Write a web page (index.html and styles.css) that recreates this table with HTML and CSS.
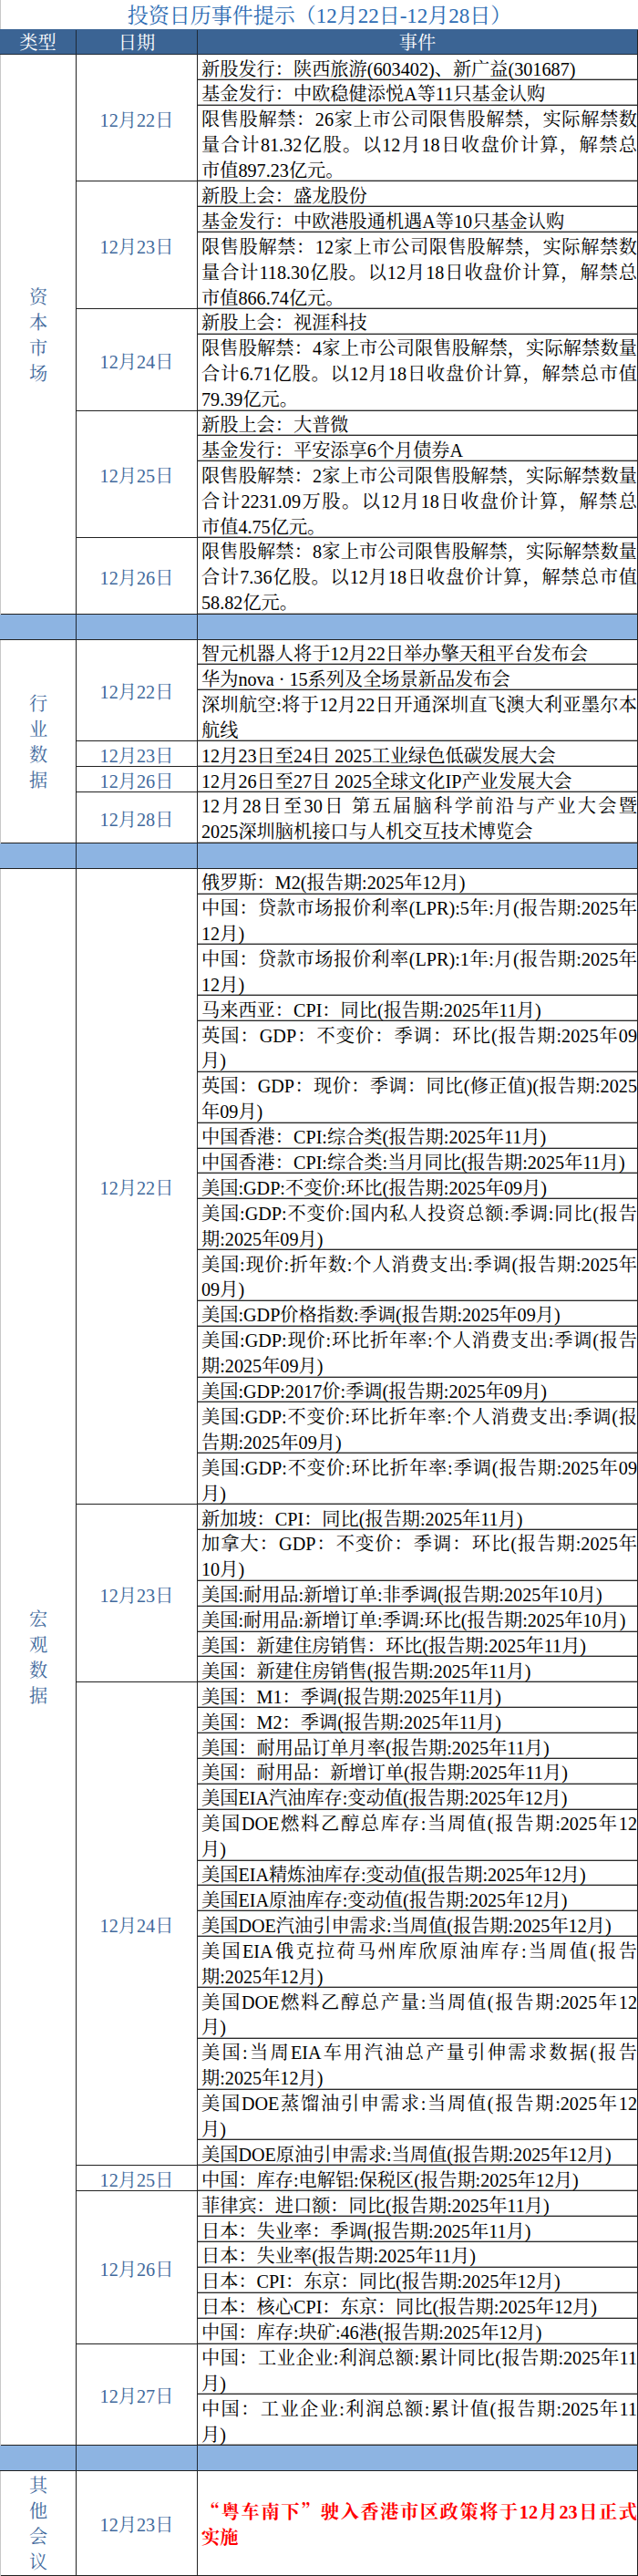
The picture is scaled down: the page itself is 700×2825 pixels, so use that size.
FILE: index.html
```html
<!DOCTYPE html>
<html lang="zh-CN">
<head>
<meta charset="utf-8">
<title>投资日历事件提示</title>
<link rel="stylesheet" href="styles.css">
</head>
<body>
<div class="sheet">
  <div class="title">投资日历事件提示（12月22日-12月28日）</div>
  <div class="row head">
    <div class="c1">类型</div><div class="c2">日期</div><div class="c3">事件</div>
  </div>

  <div class="group">
    <div class="type"><span>资<br>本<br>市<br>场</span></div>
    <div class="days">
      <div class="day">
        <div class="date">12月22日</div>
        <div class="events">
          <div class="ev">新股发行：陕西旅游(603402)、新广益(301687)</div>
          <div class="ev">基金发行：中欧稳健添悦A等11只基金认购</div>
          <div class="ev n3"><span class="jl">限售股解禁：26家上市公司限售股解禁，实际解禁数</span><span class="jl">量合计81.32亿股。以12月18日收盘价计算，解禁总</span>市值897.23亿元。</div>
        </div>
      </div>
      <div class="day">
        <div class="date">12月23日</div>
        <div class="events">
          <div class="ev">新股上会：盛龙股份</div>
          <div class="ev">基金发行：中欧港股通机遇A等10只基金认购</div>
          <div class="ev n3"><span class="jl">限售股解禁：12家上市公司限售股解禁，实际解禁数</span><span class="jl">量合计118.30亿股。以12月18日收盘价计算，解禁总</span>市值866.74亿元。</div>
        </div>
      </div>
      <div class="day">
        <div class="date">12月24日</div>
        <div class="events">
          <div class="ev">新股上会：视涯科技</div>
          <div class="ev n3"><span class="jl">限售股解禁：4家上市公司限售股解禁，实际解禁数量</span><span class="jl">合计6.71亿股。以12月18日收盘价计算，解禁总市值</span>79.39亿元。</div>
        </div>
      </div>
      <div class="day">
        <div class="date">12月25日</div>
        <div class="events">
          <div class="ev">新股上会：大普微</div>
          <div class="ev">基金发行：平安添享6个月债券A</div>
          <div class="ev n3"><span class="jl">限售股解禁：2家上市公司限售股解禁，实际解禁数量</span><span class="jl">合计2231.09万股。以12月18日收盘价计算，解禁总</span>市值4.75亿元。</div>
        </div>
      </div>
      <div class="day">
        <div class="date">12月26日</div>
        <div class="events">
          <div class="ev n3"><span class="jl">限售股解禁：8家上市公司限售股解禁，实际解禁数量</span><span class="jl">合计7.36亿股。以12月18日收盘价计算，解禁总市值</span>58.82亿元。</div>
        </div>
      </div>
    </div>
  </div>

  <div class="row sep"><div class="c1"></div><div class="c2"></div><div class="c3"></div></div>

  <div class="group">
    <div class="type"><span>行<br>业<br>数<br>据</span></div>
    <div class="days">
      <div class="day">
        <div class="date">12月22日</div>
        <div class="events">
          <div class="ev">智元机器人将于12月22日举办擎天租平台发布会</div>
          <div class="ev">华为nova · 15系列及全场景新品发布会</div>
          <div class="ev n2"><span class="jl">深圳航空:将于12月22日开通深圳直飞澳大利亚墨尔本</span>航线</div>
        </div>
      </div>
      <div class="day">
        <div class="date">12月23日</div>
        <div class="events">
          <div class="ev">12月23日至24日 2025工业绿色低碳发展大会</div>
        </div>
      </div>
      <div class="day">
        <div class="date">12月26日</div>
        <div class="events">
          <div class="ev">12月26日至27日 2025全球文化IP产业发展大会</div>
        </div>
      </div>
      <div class="day">
        <div class="date">12月28日</div>
        <div class="events">
          <div class="ev n2"><span class="jl">12月28日至30日 第五届脑科学前沿与产业大会暨</span>2025深圳脑机接口与人机交互技术博览会</div>
        </div>
      </div>
    </div>
  </div>

  <div class="row sep"><div class="c1"></div><div class="c2"></div><div class="c3"></div></div>

  <div class="group">
    <div class="type"><span>宏<br>观<br>数<br>据</span></div>
    <div class="days">
      <div class="day">
        <div class="date">12月22日</div>
        <div class="events">
          <div class="ev">俄罗斯：M2(报告期:2025年12月)</div>
          <div class="ev n2"><span class="jl">中国：贷款市场报价利率(LPR):5年:月(报告期:2025年</span>12月)</div>
          <div class="ev n2"><span class="jl">中国：贷款市场报价利率(LPR):1年:月(报告期:2025年</span>12月)</div>
          <div class="ev">马来西亚：CPI：同比(报告期:2025年11月)</div>
          <div class="ev n2"><span class="jl">英国：GDP：不变价：季调：环比(报告期:2025年09</span>月)</div>
          <div class="ev n2"><span class="jl">英国：GDP：现价：季调：同比(修正值)(报告期:2025</span>年09月)</div>
          <div class="ev">中国香港：CPI:综合类(报告期:2025年11月)</div>
          <div class="ev">中国香港：CPI:综合类:当月同比(报告期:2025年11月)</div>
          <div class="ev">美国:GDP:不变价:环比(报告期:2025年09月)</div>
          <div class="ev n2"><span class="jl">美国:GDP:不变价:国内私人投资总额:季调:同比(报告</span>期:2025年09月)</div>
          <div class="ev n2"><span class="jl">美国:现价:折年数:个人消费支出:季调(报告期:2025年</span>09月)</div>
          <div class="ev">美国:GDP价格指数:季调(报告期:2025年09月)</div>
          <div class="ev n2"><span class="jl">美国:GDP:现价:环比折年率:个人消费支出:季调(报告</span>期:2025年09月)</div>
          <div class="ev">美国:GDP:2017价:季调(报告期:2025年09月)</div>
          <div class="ev n2"><span class="jl">美国:GDP:不变价:环比折年率:个人消费支出:季调(报</span>告期:2025年09月)</div>
          <div class="ev n2"><span class="jl">美国:GDP:不变价:环比折年率:季调(报告期:2025年09</span>月)</div>
        </div>
      </div>
      <div class="day">
        <div class="date">12月23日</div>
        <div class="events">
          <div class="ev">新加坡：CPI：同比(报告期:2025年11月)</div>
          <div class="ev n2"><span class="jl">加拿大：GDP：不变价：季调：环比(报告期:2025年</span>10月)</div>
          <div class="ev">美国:耐用品:新增订单:非季调(报告期:2025年10月)</div>
          <div class="ev">美国:耐用品:新增订单:季调:环比(报告期:2025年10月)</div>
          <div class="ev">美国：新建住房销售：环比(报告期:2025年11月)</div>
          <div class="ev">美国：新建住房销售(报告期:2025年11月)</div>
        </div>
      </div>
      <div class="day">
        <div class="date">12月24日</div>
        <div class="events">
          <div class="ev">美国：M1：季调(报告期:2025年11月)</div>
          <div class="ev">美国：M2：季调(报告期:2025年11月)</div>
          <div class="ev">美国：耐用品订单月率(报告期:2025年11月)</div>
          <div class="ev">美国：耐用品：新增订单(报告期:2025年11月)</div>
          <div class="ev">美国EIA汽油库存:变动值(报告期:2025年12月)</div>
          <div class="ev n2"><span class="jl">美国DOE燃料乙醇总库存:当周值(报告期:2025年12</span>月)</div>
          <div class="ev">美国EIA精炼油库存:变动值(报告期:2025年12月)</div>
          <div class="ev">美国EIA原油库存:变动值(报告期:2025年12月)</div>
          <div class="ev">美国DOE汽油引申需求:当周值(报告期:2025年12月)</div>
          <div class="ev n2"><span class="jl">美国EIA俄克拉荷马州库欣原油库存:当周值(报告</span>期:2025年12月)</div>
          <div class="ev n2"><span class="jl">美国DOE燃料乙醇总产量:当周值(报告期:2025年12</span>月)</div>
          <div class="ev n2"><span class="jl">美国:当周EIA车用汽油总产量引伸需求数据(报告</span>期:2025年12月)</div>
          <div class="ev n2"><span class="jl">美国DOE蒸馏油引申需求:当周值(报告期:2025年12</span>月)</div>
          <div class="ev">美国DOE原油引申需求:当周值(报告期:2025年12月)</div>
        </div>
      </div>
      <div class="day">
        <div class="date">12月25日</div>
        <div class="events">
          <div class="ev">中国：库存:电解铝:保税区(报告期:2025年12月)</div>
        </div>
      </div>
      <div class="day">
        <div class="date">12月26日</div>
        <div class="events">
          <div class="ev">菲律宾：进口额：同比(报告期:2025年11月)</div>
          <div class="ev">日本：失业率：季调(报告期:2025年11月)</div>
          <div class="ev">日本：失业率(报告期:2025年11月)</div>
          <div class="ev">日本：CPI：东京：同比(报告期:2025年12月)</div>
          <div class="ev">日本：核心CPI：东京：同比(报告期:2025年12月)</div>
          <div class="ev">中国：库存:块矿:46港(报告期:2025年12月)</div>
        </div>
      </div>
      <div class="day">
        <div class="date">12月27日</div>
        <div class="events">
          <div class="ev n2"><span class="jl">中国：工业企业:利润总额:累计同比(报告期:2025年11</span>月)</div>
          <div class="ev n2"><span class="jl">中国：工业企业:利润总额:累计值(报告期:2025年11</span>月)</div>
        </div>
      </div>
    </div>
  </div>

  <div class="row sep"><div class="c1"></div><div class="c2"></div><div class="c3"></div></div>

  <div class="group">
    <div class="type"><span>其<br>他<br>会<br>议</span></div>
    <div class="days">
      <div class="day">
        <div class="date">12月23日</div>
        <div class="events">
          <div class="tall"><div class="red"><span class="jl"><span class="q">“</span>粤车南下<span class="q">”</span>驶入香港市区政策将于12月23日正式</span>实施</div></div>
        </div>
      </div>
    </div>
  </div>
</div>
</body>
</html>
```

FILE: styles.css
```css
* {
  box-sizing: border-box;
}

body {
  margin: 0;
  background: #ffffff;
  font-family: "Liberation Serif", "Noto Serif CJK SC", "Noto Sans CJK SC", serif;
  font-size: 20.2px;
  color: #000000;
}

.sheet {
  width: 700px;
}

.title {
  height: 32px;
  line-height: 32px;
  padding-top: 2px;
  text-align: center;
  font-size: 23px;
  color: #2e6db4;
  border-left: 1px solid #c8c8c8;
}

.row {
  display: flex;
}

.head {
  height: 28px;
  line-height: 28px;
  padding-top: 1px;
  background: #3b6494;
  color: #ffffff;
  box-shadow: inset 0 -1px 0 #1f2a38;
}

.c1 {
  width: 84px;
  flex: none;
  text-align: center;
  border-right: 1px solid #1f2a38;
}

.c2 {
  width: 133px;
  flex: none;
  text-align: center;
  border-right: 1px solid #1f2a38;
}

.c3 {
  flex: 1;
  text-align: center;
  border-right: 1px solid #222222;
}

.sep {
  height: 27.9px;
  background: #8db4e2;
  box-shadow: inset 0 -1px 0 #222222;
}

.group {
  display: flex;
  box-shadow: inset 0 -1px 0 #222222;
}

.type {
  width: 84px;
  flex: none;
  display: flex;
  align-items: center;
  justify-content: center;
  padding-top: 2px;
  border-left: 1px solid #c8c8c8;
  border-right: 1px solid #222222;
  color: #41699c;
  line-height: 28px;
  text-align: center;
}

.days {
  flex: 1;
  display: flex;
  flex-direction: column;
}

.day {
  display: flex;
  box-shadow: inset 0 -1px 0 #222222;
}

.date {
  width: 133px;
  flex: none;
  display: flex;
  align-items: center;
  justify-content: center;
  padding-top: 5px;
  line-height: 22.9px;
  border-right: 1px solid #222222;
  color: #41699c;
}

.events {
  flex: 1;
  min-width: 0;
  border-right: 1px solid #222222;
}

.ev {
  height: 27.9px;
  line-height: 27.9px;
  padding-top: 2.5px;
  padding-left: 4px;
  box-shadow: inset 0 -1px 0 #2a2a2a, inset 0 -2px 0 #b4b4b4;
}

.ev.n2 {
  height: 55.8px;
}

.ev.n3 {
  height: 83.7px;
}

.jl {
  display: block;
  text-align: justify;
  text-align-last: justify;
}

.tall {
  height: 114.5px;
  display: flex;
  align-items: center;
  padding-top: 3px;
  padding-left: 4px;
}

.red {
  width: 100%;
  color: #ff0000;
  font-weight: bold;
  line-height: 27.9px;
}

.q {
  font-family: "Noto Serif CJK SC", "Noto Sans CJK SC", serif;
}
```
